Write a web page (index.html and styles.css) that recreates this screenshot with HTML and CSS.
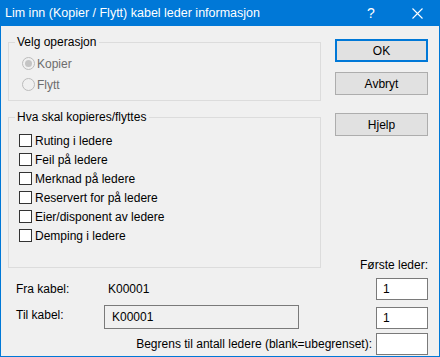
FILE: index.html
```html
<!DOCTYPE html>
<html lang="no">
	<head>
		<meta charset="UTF-8" />
		<title>Lim inn (Kopier / Flytt) kabel leder informasjon</title>
		<link rel="stylesheet" href="styles.css">
	</head>

	<body>
		<div class="dialog">
			<!-- Title bar -->
			<div class="titleBar">
				<span class="titleText">Lim inn (Kopier / Flytt) kabel leder informasjon</span>
				<span class="titleHelp">?</span>
				<span class="titleClose">
					<svg width="11" height="11" viewBox="0 0 11 11">
						<path d="M0.5 0.5 L10.5 10.5 M10.5 0.5 L0.5 10.5" stroke="#fff" stroke-width="1.1" fill="none" />
					</svg>
				</span>
			</div>

			<div class="client">
				<div class="topArea">
					<div class="leftColumn">
						<div class="groupBox groupOperation">
							<span class="groupLabel">Velg operasjon</span>
							<div class="radioRow">
								<span class="radio checked"></span>
								<span class="disabledText">Kopier</span>
							</div>
							<div class="radioRow">
								<span class="radio"></span>
								<span class="disabledText">Flytt</span>
							</div>
						</div>

						<div class="groupBox groupWhat">
							<span class="groupLabel">Hva skal kopieres/flyttes</span>
							<div class="checkRow"><span class="checkBox"></span>Ruting i ledere</div>
							<div class="checkRow"><span class="checkBox"></span>Feil på ledere</div>
							<div class="checkRow"><span class="checkBox"></span>Merknad på ledere</div>
							<div class="checkRow"><span class="checkBox"></span>Reservert for på ledere</div>
							<div class="checkRow"><span class="checkBox"></span>Eier/disponent av ledere</div>
							<div class="checkRow"><span class="checkBox"></span>Demping i ledere</div>
						</div>
					</div>

					<div class="rightColumn">
						<button class="button default">OK</button>
						<button class="button">Avbryt</button>
						<button class="button help">Hjelp</button>
						<span class="firstLabel">Første leder:</span>
					</div>
				</div>

				<div class="fieldRow rowFrom">
					<span class="fieldLabel">Fra kabel:</span>
					<span class="fieldValue">K00001</span>
					<span class="numberBox">1</span>
				</div>
				<div class="fieldRow rowTo">
					<span class="fieldLabel">Til kabel:</span>
					<span class="readBox">K00001</span>
					<span class="numberBox">1</span>
				</div>
				<div class="fieldRow rowLimit">
					<span class="limitLabel">Begrens til antall ledere (blank=ubegrenset):</span>
					<span class="numberBox"></span>
				</div>
			</div>
		</div>
	</body>
</html>
```

FILE: styles.css
```css
body {
	margin: 0;
	font-family: "Liberation Sans", Arial, sans-serif;
	font-size: 12px;
	color: #000;
}

.dialog {
	width: 440px;
	height: 357px;
	display: flex;
	flex-direction: column;
}

.titleBar {
	height: 26px;
	background-color: #0078d7;
	color: #fff;
	display: flex;
	align-items: center;
	padding-left: 5px;
}

.titleText {
	flex: 1;
	font-size: 12.5px;
}

.titleHelp {
	width: 46px;
	text-align: center;
	font-size: 14px;
}

.titleClose {
	width: 46px;
	display: flex;
	justify-content: center;
	padding-top: 1px;
}

.client {
	flex: 1;
	background-color: #f0f0f0;
	border: 1px solid #0078d7;
	border-top: none;
	padding: 0 11px 0 7px;
}

.topArea {
	display: flex;
}

.leftColumn {
	width: 313px;
	padding-top: 16px;
	display: flex;
	flex-direction: column;
	gap: 16px;
}

.groupBox {
	position: relative;
	border: 1px solid #dcdcdc;
}

.groupLabel {
	position: absolute;
	top: -8px;
	left: 6px;
	padding: 0 3px 0 2px;
	background-color: #f0f0f0;
	line-height: 15px;
}

.groupOperation {
	height: 59px;
	box-sizing: border-box;
	padding: 10px 0 0 13px;
}

.radioRow {
	display: flex;
	align-items: center;
	height: 21px;
	gap: 2px;
}

.radio {
	width: 11px;
	height: 11px;
	border: 1px solid #bcbcbc;
	border-radius: 50%;
	background-color: #f0f0f0;
	display: flex;
	align-items: center;
	justify-content: center;
}

.radio.checked::after {
	content: "";
	width: 7px;
	height: 7px;
	border-radius: 50%;
	background-color: #c4c4c4;
}

.disabledText {
	color: #6d6d6d;
}

.groupWhat {
	height: 151px;
	box-sizing: border-box;
	padding: 13px 0 0 10px;
}

.checkRow {
	display: flex;
	align-items: center;
	height: 19px;
	gap: 3px;
}

.checkBox {
	width: 11px;
	height: 11px;
	border: 1px solid #333;
	background-color: #fff;
}

.rightColumn {
	margin-left: 14px;
	width: 93px;
	padding-top: 13px;
	display: flex;
	flex-direction: column;
}

.button {
	height: 23px;
	margin: 0;
	padding: 0;
	font: inherit;
	color: #000;
	background-color: #e1e1e1;
	border: 1px solid #adadad;
	margin-bottom: 10px;
}

.button.default {
	border: 2px solid #0078d7;
}

.button.help {
	margin-top: 8px;
}

.firstLabel {
	margin-top: auto;
	margin-bottom: -5px;
	text-align: right;
	line-height: 16px;
}

.fieldRow {
	display: flex;
	align-items: center;
}

.fieldLabel {
	width: 92px;
	padding-left: 8px;
}

.numberBox {
	margin-left: auto;
	width: 44px;
	height: 20px;
	border: 1px solid #7a7a7a;
	background-color: #fff;
	padding-left: 6px;
	line-height: 20px;
}

.rowFrom {
	margin-top: 10px;
}

.rowTo {
	margin-top: 5px;
	align-items: flex-start;
}

.rowTo .fieldLabel {
	padding-top: 3px;
}

.rowTo .numberBox {
	margin-top: 2px;
}

.readBox {
	width: 186px;
	height: 22px;
	border: 1px solid #7a7a7a;
	padding-left: 7px;
	line-height: 22px;
	margin-left: -4px;
}

.rowLimit {
	margin-top: 4px;
}

.limitLabel {
	margin-left: auto;
	margin-right: 4px;
}

.rowLimit .numberBox {
	margin-left: 0;
}
```
